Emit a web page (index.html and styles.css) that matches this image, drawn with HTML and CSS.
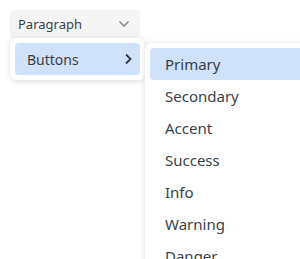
FILE: index.html
```html
<!DOCTYPE html>
<html lang="en">
<head>
    <meta charset="UTF-8">
    <title>Block menu</title>
    <link rel="stylesheet" href="styles.css">
</head>
<body>
    <!-- Block type picker -->
    <div class="toolbar">
        <button class="select-btn">
            <span>Paragraph</span>
            <svg class="chev-down" width="12" height="8" viewBox="0 0 12 8"><path d="M1.5 1.5 L6 6 L10.5 1.5" fill="none" stroke="#8a8f98" stroke-width="1.6"/></svg>
        </button>
    </div>

    <div class="menu">
        <div class="menu-item active">
            <span>Buttons</span>
            <svg width="8" height="12" viewBox="0 0 8 12"><path d="M2 1.5 L6.5 6 L2 10.5" fill="none" stroke="#2f3540" stroke-width="1.8"/></svg>
        </div>
    </div>

    <div class="submenu">
        <div class="sub-item active">Primary</div>
        <div class="sub-item">Secondary</div>
        <div class="sub-item">Accent</div>
        <div class="sub-item">Success</div>
        <div class="sub-item">Info</div>
        <div class="sub-item">Warning</div>
        <div class="sub-item">Danger</div>
    </div>
</body>
</html>
```

FILE: styles.css
```css
body {
    margin: 0;
    background-color: #ffffff;
    color: #3a3f47;
    font-family: "Noto Sans", "Open Sans", sans-serif;
    overflow: hidden;
}
.toolbar {
    padding: 10px;
}
.select-btn {
    display: flex;
    align-items: center;
    justify-content: space-between;
    width: 130px;
    height: 28px;
    padding: 0 10px 0 8px;
    border: none;
    border-radius: 4px;
    background-color: #f5f5f5;
    color: #3a3f47;
    font-family: inherit;
    font-size: 13px;
}
.menu {
    position: absolute;
    left: 10px;
    top: 38px;
    width: 135px;
    padding: 5px;
    box-sizing: border-box;
    background-color: #ffffff;
    border-radius: 6px;
    box-shadow: 0 1px 6px rgba(0, 0, 0, 0.14);
}
.menu-item {
    display: flex;
    align-items: center;
    justify-content: space-between;
    height: 32px;
    padding: 0 8px 0 12px;
    border-radius: 4px;
    font-size: 14px;
}
.active {
    background-color: #cfe2f9;
}
.submenu {
    position: absolute;
    left: 145px;
    top: 43px;
    width: 170px;
    padding: 5px;
    background-color: #ffffff;
    border-radius: 6px;
    box-shadow: 0 1px 6px rgba(0, 0, 0, 0.14);
}
.sub-item {
    height: 32px;
    line-height: 32px;
    padding-left: 15px;
    border-radius: 4px;
    font-size: 15px;
}
```
